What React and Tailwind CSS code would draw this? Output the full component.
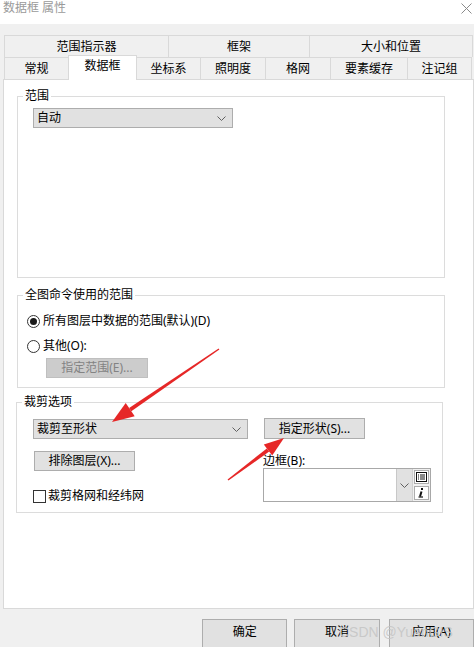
import React from 'react';

function Chevron() {
  return (
    <svg width="9" height="5" viewBox="0 0 9 5" className="shrink-0">
      <polyline points="0.5,0.5 4.5,4.5 8.5,0.5" fill="none" stroke="#606060" strokeWidth="1" />
    </svg>
  );
}

function Select({ label, className = '' }) {
  return (
    <div className={`h-[20px] bg-[#e1e1e1] border border-[#adadad] flex items-center justify-between pl-[3px] pr-[6px] ${className}`}>
      <span className="leading-[14px]">{label}</span>
      <Chevron />
    </div>
  );
}

function Button({ children, className = '', disabled }) {
  return (
    <div
      className={`flex items-center justify-center border leading-[14px] ${
        disabled ? 'bg-[#cccccc] border-[#bfbfbf] text-[#838383]' : 'bg-[#e1e1e1] border-[#adadad]'
      } ${className}`}
    >
      {children}
    </div>
  );
}

function Group({ title, className = '', children }) {
  return (
    <div className={`relative border border-[#dcdcdc] ${className}`}>
      <span className="absolute left-[5px] -top-[8px] bg-white px-[2px] leading-[14px]">{title}</span>
      {children}
    </div>
  );
}

function Radio({ checked }) {
  return (
    <span className="w-[13px] h-[13px] rounded-full border border-[#333] bg-white flex items-center justify-center shrink-0">
      {checked && <span className="w-[7px] h-[7px] rounded-full bg-[#1a1a1a]" />}
    </span>
  );
}

const topTabs = [
  { label: '范围指示器', w: 'w-[164px]' },
  { label: '框架', w: 'w-[141px]' },
  { label: '大小和位置', w: 'w-[164px]' },
];

const bottomTabs = [
  { label: '常规', w: 'w-[64px]' },
  { label: '数据框', w: 'w-[69px]', active: true },
  { label: '坐标系', w: 'w-[64px]' },
  { label: '照明度', w: 'w-[65px]' },
  { label: '格网', w: 'w-[65px]' },
  { label: '要素缓存', w: 'w-[77px]' },
  { label: '注记组', w: 'w-[65px]' },
];

export default function App() {
  return (
    <div className="relative w-[474px] h-[647px] overflow-hidden bg-[#f0f0f0] text-[12px] text-black font-['Noto_Sans','Noto_Sans_CJK_SC',sans-serif]">
      {/* Title bar */}
      <div className="h-[24px] bg-white flex items-start justify-between pl-[3px] pr-[2px] pt-[1px]">
        <span className="text-[#9a9a9a] leading-[14px]">数据框 属性</span>
        <svg width="11" height="11" viewBox="0 0 11 11" className="mt-[2px]">
          <path d="M0.5 0.5 L10.5 10.5 M10.5 0.5 L0.5 10.5" stroke="#8a8a8a" strokeWidth="1" />
        </svg>
      </div>

      {/* Tabs */}
      <div className="pl-[4px] pt-[11px]">
        <div className="flex h-[22px]">
          {topTabs.map((t, i) => (
            <div
              key={t.label}
              className={`${t.w} flex items-center justify-center border-t border-l border-[#d9d9d9] leading-[14px] ${i === topTabs.length - 1 ? 'border-r' : ''}`}
            >
              {t.label}
            </div>
          ))}
        </div>
        <div className="flex h-[22px] items-end">
          {bottomTabs.map((t, i) =>
            t.active ? (
              <div
                key={t.label}
                className={`${t.w} relative z-10 h-[25px] -mb-[1px] -mr-[1px] bg-white border-t border-l border-r border-[#d9d9d9] flex items-start justify-center pt-[3px] leading-[14px]`}
              >
                {t.label}
              </div>
            ) : (
              <div
                key={t.label}
                className={`${t.w} h-[22px] flex items-center justify-center border-t border-l border-[#d9d9d9] leading-[14px] ${i === bottomTabs.length - 1 ? 'border-r' : ''}`}
              >
                {t.label}
              </div>
            )
          )}
        </div>
      </div>

      {/* Tab panel */}
      <div className="ml-[3px] w-[471px] h-[530px] bg-white border border-[#d9d9d9] pt-[16px] pl-[13px]">
        <Group title="范围" className="w-[428px] h-[182px] pl-[15px] pt-[11px]">
          <Select label="自动" className="w-[200px]" />
        </Group>

        <Group title="全图命令使用的范围" className="mt-[17px] w-[428px] h-[93px] pl-[9px] pt-[17px]">
          <div className="flex items-center gap-[3px] h-[16px]">
            <Radio checked />
            <span className="leading-[14px]">所有图层中数据的范围(默认)(D)</span>
          </div>
          <div className="flex items-center gap-[3px] h-[16px] mt-[9px]">
            <Radio />
            <span className="leading-[14px]">其他(O):</span>
          </div>
          <Button disabled className="ml-[19px] mt-[4px] w-[102px] h-[20px]">
            指定范围(E)...
          </Button>
        </Group>

        <Group title="裁剪选项" className="mt-[14px] -ml-[1px] w-[427px] h-[111px] flex pl-[16px] pt-[16px]">
          <div className="w-[215px] flex flex-col">
            <Select label="裁剪至形状" className="w-full" />
            <Button className="mt-[12px] ml-px w-[101px] h-[20px]">排除图层(X)...</Button>
            <div className="flex items-center gap-[2px] h-[16px] mt-[17px]">
              <span className="w-[13px] h-[13px] border border-[#333] bg-white shrink-0" />
              <span className="leading-[14px]">裁剪格网和经纬网</span>
            </div>
          </div>
          <div className="ml-[15px] flex flex-col">
            <Button className="-mt-[1px] ml-px w-[101px] h-[21px]">指定形状(S)...</Button>
            <span className="mt-[15px] leading-[14px]">边框(B):</span>
            <div className="w-[168px] h-[34px] border border-[#a8a8a8] flex bg-white">
              <div className="flex-1" />
              <div className="w-[16px] bg-[#e1e1e1] border-l border-[#c8c8c8] flex items-center justify-center">
                <Chevron />
              </div>
              <div className="w-[18px] flex flex-col items-center justify-center gap-[2px] bg-[#f0f0f0] border-l border-[#d0d0d0]">
                <div className="w-[15px] h-[14px] bg-white border border-[#adadad] flex items-center justify-center">
                  <svg width="11" height="10" viewBox="0 0 11 10">
                    <rect x="0.5" y="0.5" width="10" height="9" fill="none" stroke="#111" strokeWidth="1" />
                    <path d="M2 3 H3 M4 3 H9 M2 5 H3 M4 5 H9 M2 7 H3 M4 7 H9" stroke="#111" strokeWidth="1" />
                  </svg>
                </div>
                <div className="w-[15px] h-[14px] bg-white border border-[#adadad] flex items-center justify-center">
                  <svg width="9" height="10" viewBox="0 0 9 10">
                    <rect x="4" y="0" width="2" height="2" fill="#111" />
                    <path d="M4.5 3.5 L3 8.5" stroke="#111" strokeWidth="2" />
                    <path d="M1.5 9 H6" stroke="#111" strokeWidth="1.2" />
                  </svg>
                </div>
              </div>
            </div>
          </div>
        </Group>
      </div>

      {/* Bottom buttons */}
      <div className="flex mt-[10px] ml-[202px]">
        <Button className="w-[86px] h-[30px] !items-start pt-[5px]">确定</Button>
        <Button className="ml-[7px] w-[86px] h-[30px] !items-start pt-[5px]">取消</Button>
        <Button className="ml-[9px] w-[86px] h-[30px] !items-start pt-[5px]">应用(A)</Button>
      </div>

      {/* Watermark */}
      <span className="absolute left-[339px] top-[625px] text-[14px] leading-none text-[#c4c4c4]/85 font-['Liberation_Sans',sans-serif] pointer-events-none">
        CSDN @YuanGIS
      </span>

      {/* Annotation arrows */}
      <svg className="absolute inset-0 pointer-events-none" width="474" height="647" viewBox="0 0 474 647">
        <polygon points="219.4,349.6 218.6,348.4 129.1,407.9 131.3,411.3" fill="#e62727" />
        <polygon points="112,422 134.7,416.2 125.7,403.0" fill="#e62727" />
        <polygon points="228.45,480.6 227.55,479.4 266.8,448.4 269.2,451.6" fill="#e62727" />
        <polygon points="284,438 272.2,455.6 263.8,444.4" fill="#e62727" />
      </svg>
    </div>
  );
}
